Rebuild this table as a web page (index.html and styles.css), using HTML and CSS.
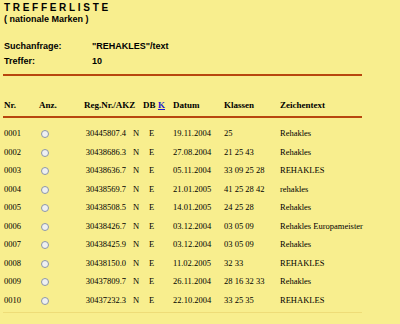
FILE: index.html
```html
<!DOCTYPE html>
<html>
<head>
<meta charset="utf-8">
<link rel="stylesheet" href="styles.css">
</head>
<body>
<div class="page">
  <div class="title">TREFFERLISTE</div>
  <div class="subtitle">( nationale Marken )</div>
  <div class="meta">
    <div class="label">Suchanfrage:</div><div class="value">"REHAKLES"/text</div>
    <div class="label">Treffer:</div><div class="value">10</div>
  </div>
  <div class="rule"></div>
  <div class="results">
    <div class="row head">
      <span class="c-nr">Nr.</span>
      <span class="c-anz">Anz.</span>
      <span class="c-reg">Reg.Nr./AKZ</span>
      <span class="c-db">DB</span>
      <span class="c-k"><a href="#">K</a></span>
      <span class="c-date">Datum</span>
      <span class="c-kl">Klassen</span>
      <span class="c-txt">Zeichentext</span>
    </div>
    <div class="rule rule-head"></div>
    <div class="rows">
      <div class="row"><span class="c-nr">0001</span><span class="c-anz"><i class="radio"></i></span><span class="c-reg">30445807.4</span><span class="c-db">N</span><span class="c-k">E</span><span class="c-date">19.11.2004</span><span class="c-kl">25</span><span class="c-txt">Rehakles</span></div>
      <div class="row"><span class="c-nr">0002</span><span class="c-anz"><i class="radio"></i></span><span class="c-reg">30438686.3</span><span class="c-db">N</span><span class="c-k">E</span><span class="c-date">27.08.2004</span><span class="c-kl">21 25 43</span><span class="c-txt">Rehakles</span></div>
      <div class="row"><span class="c-nr">0003</span><span class="c-anz"><i class="radio"></i></span><span class="c-reg">30438636.7</span><span class="c-db">N</span><span class="c-k">E</span><span class="c-date">05.11.2004</span><span class="c-kl">33 09 25 28</span><span class="c-txt">REHAKLES</span></div>
      <div class="row"><span class="c-nr">0004</span><span class="c-anz"><i class="radio"></i></span><span class="c-reg">30438569.7</span><span class="c-db">N</span><span class="c-k">E</span><span class="c-date">21.01.2005</span><span class="c-kl">41 25 28 42</span><span class="c-txt">rehakles</span></div>
      <div class="row"><span class="c-nr">0005</span><span class="c-anz"><i class="radio"></i></span><span class="c-reg">30438508.5</span><span class="c-db">N</span><span class="c-k">E</span><span class="c-date">14.01.2005</span><span class="c-kl">24 25 28</span><span class="c-txt">Rehakles</span></div>
      <div class="row"><span class="c-nr">0006</span><span class="c-anz"><i class="radio"></i></span><span class="c-reg">30438426.7</span><span class="c-db">N</span><span class="c-k">E</span><span class="c-date">03.12.2004</span><span class="c-kl">03 05 09</span><span class="c-txt">Rehakles Europameister</span></div>
      <div class="row"><span class="c-nr">0007</span><span class="c-anz"><i class="radio"></i></span><span class="c-reg">30438425.9</span><span class="c-db">N</span><span class="c-k">E</span><span class="c-date">03.12.2004</span><span class="c-kl">03 05 09</span><span class="c-txt">Rehakles</span></div>
      <div class="row"><span class="c-nr">0008</span><span class="c-anz"><i class="radio"></i></span><span class="c-reg">30438150.0</span><span class="c-db">N</span><span class="c-k">E</span><span class="c-date">11.02.2005</span><span class="c-kl">32 33</span><span class="c-txt">REHAKLES</span></div>
      <div class="row"><span class="c-nr">0009</span><span class="c-anz"><i class="radio"></i></span><span class="c-reg">30437809.7</span><span class="c-db">N</span><span class="c-k">E</span><span class="c-date">26.11.2004</span><span class="c-kl">28 16 32 33</span><span class="c-txt">Rehakles</span></div>
      <div class="row"><span class="c-nr">0010</span><span class="c-anz"><i class="radio"></i></span><span class="c-reg">30437232.3</span><span class="c-db">N</span><span class="c-k">E</span><span class="c-date">22.10.2004</span><span class="c-kl">33 25 35</span><span class="c-txt">REHAKLES</span></div>
    </div>
    <div class="rule rule-foot"></div>
  </div>
</div>
</body>
</html>
```

FILE: styles.css
```css
html, body {
  margin: 0;
  padding: 0;
  background: #f8ee8e;
}
.page {
  width: 400px;
  height: 324px;
  overflow: hidden;
  padding: 2px 0 0 4px;
  box-sizing: border-box;
  color: #000;
}
.title {
  font-family: "Liberation Sans", Arial, sans-serif;
  font-weight: bold;
  font-size: 10px;
  line-height: 12px;
  letter-spacing: 2.7px;
}
.subtitle {
  font-family: "Liberation Sans", Arial, sans-serif;
  font-weight: bold;
  font-size: 9px;
  line-height: 10px;
}
.meta {
  display: grid;
  grid-template-columns: 88px auto;
  row-gap: 4px;
  margin-top: 17px;
  font-family: "Liberation Sans", Arial, sans-serif;
  font-weight: bold;
  font-size: 9px;
  line-height: 11px;
}
.rule {
  width: 359px;
  height: 2px;
  margin-left: -1px;
  background: #b8460e;
  margin-top: 7px;
}
.results {
  font-family: "Liberation Serif", "Times New Roman", serif;
  font-size: 8.5px;
}
.row {
  display: flex;
  align-items: center;
  height: 18.5px;
  white-space: nowrap;
}
.head {
  margin-top: 23px;
  height: 12px;
  font-weight: bold;
  font-size: 9px;
}
.rule-head {
  margin-top: 5px;
}
.rows {
  margin-top: 6px;
}
.c-nr { width: 34px; }
.c-anz { width: 46px; }
.c-reg { width: 42px; text-align: right; }
.c-db { width: 16px; padding-left: 7px; }
.c-k { width: 24px; }
.c-date { width: 51px; }
.c-kl { width: 56px; }
.head .c-anz { padding-left: 1px; width: 45px; }
.head .c-reg { width: 59px; text-align: left; }
.head .c-db { width: 15px; padding-left: 0; }
.head .c-k { width: 15px; }
.c-k a { color: #1a1acc; text-decoration: underline; }
.radio {
  display: inline-block;
  width: 6px;
  height: 6px;
  border-radius: 50%;
  border: 1px solid #8d96a6;
  background: #eef0f2;
  margin-left: 3px;
  vertical-align: middle;
}
.rule-foot {
  margin-top: 3px;
  height: 1px;
  background: #eedc78;
}
```
